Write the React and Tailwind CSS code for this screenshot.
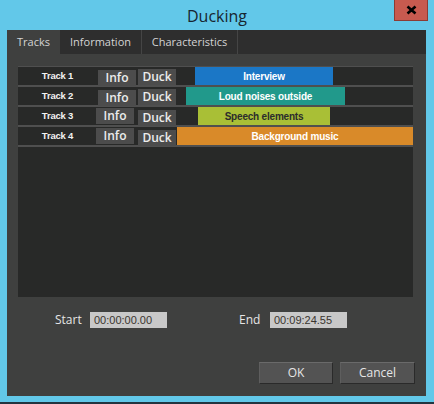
import React from "react";

const tracks = [
  { name: "Track 1", info: "ml-px mt-[3px]", duck: "ml-[2px] mt-[2px]", gap: "w-[19px]", bar: "w-[138px] bg-[#1b77c6] text-white", label: "Interview" },
  { name: "Track 2", info: "ml-px mt-[3px]", duck: "ml-[2px] mt-[2px]", gap: "w-[10px]", bar: "w-[159px] bg-[#21998b] text-white", label: "Loud noises outside" },
  { name: "Track 3", info: "ml-[-1px] mt-[1px]", duck: "ml-[4px] mt-[3px]", gap: "w-[22px]", bar: "w-[132px] bg-[#a9bf36] text-[#2c2c2c]", label: "Speech elements" },
  { name: "Track 4", info: "ml-[-1px] mt-[1px]", duck: "ml-[4px] mt-[3px]", gap: "w-[1px]", bar: "flex-1 bg-[#d98a29] text-white", label: "Background music" },
];

function Row({ t }) {
  return (
    <div className="flex h-[20px] border-b-2 border-[#4f4f4f]">
      <div className="w-[79px] flex items-center justify-center text-[9.5px] font-bold text-[#f2f2f2] tracking-[-0.2px]" style={{ fontFamily: '"Liberation Sans", Arial, sans-serif' }}>
        {t.name}
      </div>
      <div className={`w-[38px] h-[16px] bg-[#4c4c4c] flex items-center justify-center text-[12px] font-semibold text-[#ececec] ${t.info}`}>
        Info
      </div>
      <div className={`w-[38px] h-[16px] bg-[#4c4c4c] flex items-center justify-center text-[12px] font-semibold text-[#ececec] ${t.duck}`}>
        Duck
      </div>
      <div className="flex-1 flex">
        <div className={t.gap} />
        <div className={`${t.bar} flex items-center justify-center text-[10px] font-bold tracking-[-0.2px]`} style={{ fontFamily: '"Liberation Sans", Arial, sans-serif' }}>
          {t.label}
        </div>
      </div>
    </div>
  );
}

export default function App() {
  return (
    <div className="w-[434px] h-[404px] bg-[#62c8e9] border-b-2 border-[#23343f] flex flex-col" style={{ fontFamily: 'Lato, "Open Sans", sans-serif' }}>
      <div className="relative h-[30px] flex items-center justify-center">
        <span className="text-[16px] text-[#17252f] mt-[1px]" style={{ fontFamily: '"Open Sans", sans-serif' }}>Ducking</span>
        <div className="absolute right-[6px] top-0 w-[34px] h-[21px] bg-[#c75a4f] border border-[#8c3b34] border-t-0 flex items-center justify-center">
          <svg width="11" height="10" viewBox="0 0 11 10">
            <path d="M1.5 1.5 L9.5 8.5 M9.5 1.5 L1.5 8.5" stroke="#000" strokeWidth="2.6" strokeLinecap="butt" />
          </svg>
        </div>
      </div>
      <div className="ml-[7px] w-[419px] h-[366px] bg-[#3f403f] flex flex-col">
        <div className="h-[24px] bg-[#2e2e2e] flex text-[11px] text-[#d4d4d4]" style={{ fontFamily: '"Open Sans", sans-serif' }}>
          <div className="w-[53px] bg-[#3f403f] flex items-center justify-center">Tracks</div>
          <div className="w-[82px] border-r border-[#454545] flex items-center justify-center">Information</div>
          <div className="w-[96px] border-r border-[#454545] flex items-center justify-center">Characteristics</div>
        </div>
        <div className="mt-[12px] ml-[11px] w-[395px] h-[231px] bg-[#282928] border-t border-[#4f4f4f] flex flex-col" style={{ fontFamily: '"Open Sans", sans-serif' }}>
          {tracks.map((t) => (
            <Row key={t.name} t={t} />
          ))}
        </div>
        <div className="mt-[15px] flex items-center h-[16px] text-[12px] text-[#e6e6e6]" style={{ fontFamily: '"Open Sans", sans-serif' }}>
          <span className="ml-[48px] w-[35px]">Start</span>
          <div className="w-[77px] h-[16px] bg-[#c8c8c8] text-[#3a352f] text-[11px] flex items-center pl-[4px]" style={{ fontFamily: '"Liberation Sans", Arial, sans-serif' }}>00:00:00.00</div>
          <span className="ml-[72px] w-[31px]">End</span>
          <div className="w-[77px] h-[16px] bg-[#c8c8c8] text-[#3a352f] text-[11px] flex items-center pl-[4px]" style={{ fontFamily: '"Liberation Sans", Arial, sans-serif' }}>00:09:24.55</div>
        </div>
        <div className="mt-auto mb-[12px] mr-[11px] flex justify-end gap-[7px] text-[12px] text-[#e6e6e6]" style={{ fontFamily: '"Open Sans", sans-serif' }}>
          <div className="w-[74px] h-[22px] bg-[#535353] border border-t-[#6a6a6a] border-l-[#5e5e5e] border-r-[#2a2a2a] border-b-[#2a2a2a] flex items-center justify-center">OK</div>
          <div className="w-[75px] h-[22px] bg-[#535353] border border-t-[#6a6a6a] border-l-[#5e5e5e] border-r-[#2a2a2a] border-b-[#2a2a2a] flex items-center justify-center">Cancel</div>
        </div>
      </div>
    </div>
  );
}
